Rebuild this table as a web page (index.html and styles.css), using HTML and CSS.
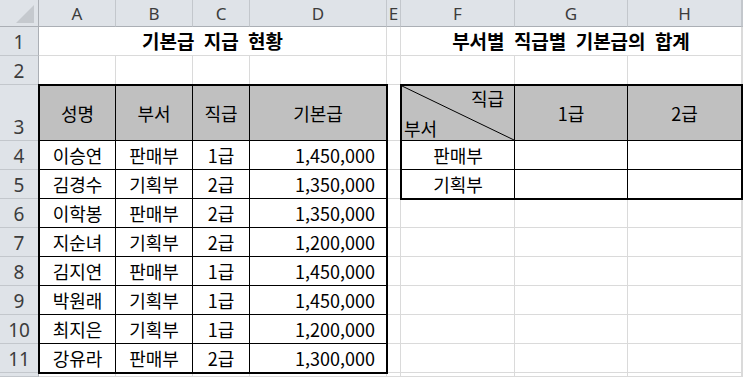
FILE: index.html
```html
<!DOCTYPE html>
<html lang="ko">
<head>
<meta charset="utf-8">
<title>기본급 지급 현황</title>
<link rel="stylesheet" href="styles.css">
</head>
<body>
<div class="sheet">
  <!-- column headers -->
  <div class="corner"><svg width="18" height="18" viewBox="0 0 18 18"><polygon points="18,0 18,18 0,18" fill="#c5c9ce"/></svg></div>
  <div class="ch">A</div><div class="ch">B</div><div class="ch">C</div><div class="ch">D</div><div class="ch">E</div><div class="ch">F</div><div class="ch">G</div><div class="ch">H</div><div class="ch"></div>
  <!-- row 1 -->
  <div class="rh">1</div><div class="c"></div><div class="c"></div>
  <!-- row 2 -->
  <div class="rh">2</div><div class="c"></div><div class="c"></div><div class="c"></div><div class="c"></div><div class="c"></div><div class="c"></div><div class="c"></div><div class="c"></div><div class="c"></div>
  <!-- rows 3-5 -->
  <div class="rh">3</div><div class="c"></div><div class="c"></div>
  <div class="rh">4</div><div class="c"></div><div class="c"></div>
  <div class="rh">5</div><div class="c"></div><div class="c"></div>
  <!-- rows 6-11 -->
  <div class="rh">6</div><div class="c"></div><div class="c"></div><div class="c"></div><div class="c"></div><div class="c"></div>
  <div class="rh">7</div><div class="c"></div><div class="c"></div><div class="c"></div><div class="c"></div><div class="c"></div>
  <div class="rh">8</div><div class="c"></div><div class="c"></div><div class="c"></div><div class="c"></div><div class="c"></div>
  <div class="rh">9</div><div class="c"></div><div class="c"></div><div class="c"></div><div class="c"></div><div class="c"></div>
  <div class="rh">10</div><div class="c"></div><div class="c"></div><div class="c"></div><div class="c"></div><div class="c"></div>
  <div class="rh">11</div><div class="c"></div><div class="c"></div><div class="c"></div><div class="c"></div><div class="c"></div>
  <!-- row 12 (only its top edge is visible) -->
  <div class="rh"></div><div class="c"></div><div class="c"></div><div class="c"></div><div class="c"></div><div class="c"></div><div class="c"></div><div class="c"></div><div class="c"></div><div class="c"></div>

  <!-- merged titles -->
  <div class="c title title1">기본급 지급 현황</div>
  <div class="c title title2">부서별 직급별 기본급의 합계</div>

  <!-- left table -->
  <div class="tbl tbl1">
    <div class="hd">성명</div><div class="hd">부서</div><div class="hd">직급</div><div class="hd">기본급</div>
    <div>이승연</div><div>판매부</div><div>1급</div><div class="num">1,450,000</div>
    <div>김경수</div><div>기획부</div><div>2급</div><div class="num">1,350,000</div>
    <div>이학봉</div><div>판매부</div><div>2급</div><div class="num">1,350,000</div>
    <div>지순녀</div><div>기획부</div><div>2급</div><div class="num">1,200,000</div>
    <div>김지연</div><div>판매부</div><div>1급</div><div class="num">1,450,000</div>
    <div>박원래</div><div>기획부</div><div>1급</div><div class="num">1,450,000</div>
    <div>최지은</div><div>기획부</div><div>1급</div><div class="num">1,200,000</div>
    <div>강유라</div><div>판매부</div><div>2급</div><div class="num">1,300,000</div>
  </div>

  <!-- right table -->
  <div class="tbl tbl2">
    <div class="hd diag">
      <svg class="slash" viewBox="0 0 100 100" preserveAspectRatio="none"><line x1="0" y1="0" x2="100" y2="100" stroke="#000" stroke-width="1" vector-effect="non-scaling-stroke"/></svg>
      <span class="dtop">직급</span>
      <span class="dbot">부서</span>
    </div>
    <div class="hd">1급</div><div class="hd">2급</div>
    <div>판매부</div><div></div><div></div>
    <div>기획부</div><div></div><div></div>
  </div>
</div>
</body>
</html>
```

FILE: styles.css
```css
body {
  margin: 0;
  background: #fff;
}

.sheet {
  display: grid;
  width: 743px;
  height: 377px;
  overflow: hidden;
  grid-template-columns: 39px 77px 77px 57px 137px 14px 114px 113px 114px 1fr;
  grid-template-rows: 27px 29px 29px 56px repeat(8, 29px) 1fr;
  font-family: "Noto Sans CJK KR", "Noto Sans", sans-serif;
  font-size: 18px;
  color: #000;
}

.c {
  background: #fff;
  border-right: 1px solid #dadada;
  border-bottom: 1px solid #dadada;
  min-width: 0;
}

.corner {
  background: #dfe3e8;
  border-right: 1px solid #abafb5;
  border-bottom: 1px solid #abafb5;
  display: flex;
  justify-content: flex-end;
  align-items: flex-end;
  padding: 0 4px 3px 0;
}

.ch {
  background: #dfe3e8;
  border-right: 1px solid #c3c7cc;
  border-bottom: 1px solid #abafb5;
  display: flex;
  align-items: center;
  justify-content: center;
  font-family: "Noto Sans", sans-serif;
  font-size: 17px;
  color: #3c3c3c;
  min-width: 0;
}

.rh {
  background: #dfe3e8;
  border-right: 1px solid #abafb5;
  border-bottom: 1px solid #c3c7cc;
  display: flex;
  align-items: flex-end;
  justify-content: center;
  padding-bottom: 1px;
  font-family: "Noto Sans", sans-serif;
  font-size: 19px;
  line-height: 24px;
  color: #3c3c3c;
}

.title {
  grid-row: 2;
  display: flex;
  align-items: center;
  justify-content: center;
  font-size: 19px;
  font-weight: 700;
  word-spacing: 4px;
  padding-bottom: 2px;
}

.title1 { grid-column: 2 / 6; }
.title2 { grid-column: 7 / 10; }

.tbl {
  margin: -1px;
  border: 2px solid #000;
  background: #fff;
  display: grid;
  z-index: 1;
}

.tbl1 {
  grid-row: 4 / 13;
  grid-column: 2 / 6;
  grid-template-columns: 76px 77px 57px 1fr;
  grid-template-rows: 55px repeat(7, 29px) 1fr;
}

.tbl2 {
  grid-row: 4 / 7;
  grid-column: 7 / 10;
  grid-template-columns: 113px 113px 1fr;
  grid-template-rows: 55px 29px 1fr;
}

.tbl > div {
  border-right: 1px solid #000;
  border-bottom: 1px solid #000;
  display: flex;
  align-items: center;
  justify-content: center;
  min-width: 0;
  white-space: nowrap;
}

.tbl1 > div:nth-child(4n) { border-right: 0; }
.tbl1 > div:nth-last-child(-n+4) { border-bottom: 0; }
.tbl2 > div:nth-child(3n) { border-right: 0; }
.tbl2 > div:nth-last-child(-n+3) { border-bottom: 0; }

.hd { background: #c0c0c0; }

.tbl > .num {
  justify-content: flex-end;
  padding-right: 11px;
}

.tbl > .diag {
  position: relative;
  flex-direction: column;
  justify-content: space-between;
  align-items: stretch;
}

.slash {
  position: absolute;
  left: 0;
  top: 0;
  width: 100%;
  height: 100%;
  overflow: visible;
}

.dtop {
  align-self: flex-end;
  padding-right: 10px;
  line-height: 24px;
}

.dbot {
  align-self: flex-start;
  padding-left: 2px;
  line-height: 24px;
}
```
